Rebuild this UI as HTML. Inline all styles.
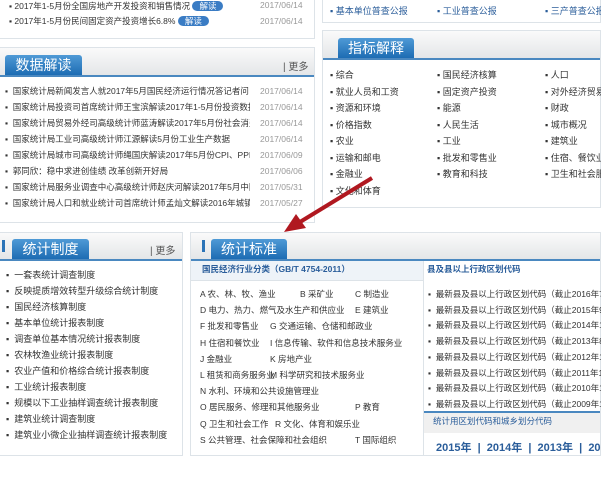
<!DOCTYPE html><html><head><meta charset="utf-8"><style>
*{margin:0;padding:0;box-sizing:border-box}
html,body{width:601px;height:479px;overflow:hidden}
body{background:#fff;font-family:"Liberation Sans","Noto Sans CJK SC",sans-serif;font-size:10px;color:#333;position:relative}
.p{position:absolute;border:1px solid #dde3e8;background:#fff;overflow:hidden}
.hd{position:absolute;left:0;right:0;top:0;background:linear-gradient(#fafafa,#e4e6e8);border-bottom:2px solid #4a88c0}
.tab{position:absolute;bottom:0;background:linear-gradient(#4f9ad6,#1d6cb3);color:#fff;font-size:14px;text-align:center;border-radius:3px 3px 0 0}
.r{position:absolute;white-space:nowrap;font-size:9px;overflow:hidden}
.d{position:absolute;color:#999;font-size:8.5px}
.more{position:absolute;font-size:10px;color:#555}
</style></head><body>
<div class="p" style="left:-1px;top:-2px;width:316px;height:41px"></div>
<div class="r" style="left:9px;top:0;font-size:8.5px">▪ 2017年1-5月份全国房地产开发投资和销售情况 <span style="background:#3a7cc4;color:#fff;border-radius:7px;padding:0 7px">解读</span></div>
<div class="d" style="left:260px;top:0">2017/06/14</div>
<div class="r" style="left:9px;top:15px;font-size:8.5px">▪ 2017年1-5月份民间固定资产投资增长6.8% <span style="background:#3a7cc4;color:#fff;border-radius:7px;padding:0 7px">解读</span></div>
<div class="d" style="left:260px;top:16px">2017/06/14</div>

<div class="p" style="left:322px;top:-2px;width:279px;height:25px"></div>
<div class="r" style="left:330px;top:4px;color:#2a5d9a">▪ 基本单位普查公报</div>
<div class="r" style="left:437px;top:4px;color:#2a5d9a">▪ 工业普查公报</div>
<div class="r" style="left:545px;top:4px;color:#2a5d9a;width:56px">▪ 三产普查公报</div>

<div class="p" style="left:-1px;top:47px;width:316px;height:176px">
<div class="hd" style="height:29px"><div class="tab" style="left:5px;width:77px;height:20px;line-height:20px">数据解读</div></div>
<div class="more" style="left:283px;top:10px">| 更多</div></div>
<div id="sj"></div>

<div class="p" style="left:322px;top:30px;width:279px;height:178px">
<div class="hd" style="height:29px"><div class="tab" style="left:15px;width:76px;height:20px;line-height:20px">指标解释</div></div></div>
<div id="zb"></div>

<div class="p" style="left:-1px;top:232px;width:184px;height:224px">
<div class="hd" style="height:28px"><div style="position:absolute;left:2px;top:7px;width:3px;height:12px;background:#2c74b8"></div><div class="tab" style="left:12px;width:77px;height:20px;line-height:20px">统计制度</div></div>
<div class="more" style="left:150px;top:9px">| 更多</div></div>
<div id="zd"></div>

<div class="p" style="left:190px;top:232px;width:411px;height:224px">
<div class="hd" style="height:28px"><div style="position:absolute;left:11px;top:7px;width:3px;height:12px;background:#2c74b8"></div><div class="tab" style="left:20px;width:76px;height:20px;line-height:20px">统计标准</div></div>
<div style="position:absolute;left:0;top:28px;width:232px;height:20px;background:#eef3f8;border-bottom:1px solid #dde3e8"></div>
<div style="position:absolute;left:232px;top:28px;bottom:0;border-left:1px solid #dde3e8"></div>
<div style="position:absolute;left:233px;top:178px;right:0;height:2px;background:#4a88c0"></div>
<div style="position:absolute;left:233px;top:180px;right:0;height:20px;background:#f0f0f0"></div>
</div>
<div class="r" style="left:202px;top:263px;color:#2a5d9a;font-weight:bold;font-size:8.5px">国民经济行业分类（GB/T 4754-2011）</div>
<div class="r" style="left:427px;top:263px;color:#2a5d9a;font-weight:bold;font-size:8.5px">县及县以上行政区划代码</div>
<div class="r" style="left:433px;top:415px;color:#2a5d9a;font-size:8.5px">统计用区划代码和城乡划分代码</div>
<div class="r" style="left:436px;top:439px;color:#2a5d9a;font-weight:bold;font-size:11px;width:165px">2015年 &nbsp;|&nbsp; 2014年 &nbsp;|&nbsp; 2013年 &nbsp;|&nbsp; 2012年</div>
<div id="bz"></div>

<svg style="position:absolute;left:0;top:0" width="601" height="479"><path d="M372 178 L300 222" stroke="#b01820" stroke-width="4" fill="none"/><polygon points="284,232 296,214 306,228" fill="#b01820"/></svg>
<script>
function add(id,html){document.getElementById(id).insertAdjacentHTML('beforeend',html)}
var sj=["国家统计局新闻发言人就2017年5月国民经济运行情况答记者问","国家统计局投资司首席统计师王宝滨解读2017年1-5月份投资数据","国家统计局贸易外经司高级统计师蓝涛解读2017年5月份社会消费...","国家统计局工业司高级统计师江源解读5月份工业生产数据","国家统计局城市司高级统计师绳国庆解读2017年5月份CPI、PPI数据","郭同欣：稳中求进创佳绩 改革创新开好局","国家统计局服务业调查中心高级统计师赵庆河解读2017年5月中国...","国家统计局人口和就业统计司首席统计师孟灿文解读2016年城镇..."];
var sd=["2017/06/14","2017/06/14","2017/06/14","2017/06/14","2017/06/09","2017/06/06","2017/05/31","2017/05/27"];
sj.forEach(function(t,i){var y=85+i*16;add('sj','<div class="r" style="left:5px;top:'+y+'px;width:245px;font-size:8.5px">▪ &nbsp;'+t+'</div><div class="d" style="left:260px;top:'+(y+1)+'px">'+sd[i]+'</div>')});
var zb=[["综合","国民经济核算","人口"],["就业人员和工资","固定资产投资","对外经济贸易"],["资源和环境","能源","财政"],["价格指数","人民生活","城市概况"],["农业","工业","建筑业"],["运输和邮电","批发和零售业","住宿、餐饮业和"],["金融业","教育和科技","卫生和社会服务"],["文化和体育","",""]];
zb.forEach(function(r,i){var y=68+i*16.5;[330,437,545].forEach(function(x,j){if(r[j])add('zb','<div class="r" style="left:'+x+'px;top:'+y+'px;width:'+(j==2?56:100)+'px">▪ '+r[j]+'</div>')})});
var zd=["一套表统计调查制度","反映提质增效转型升级综合统计制度","国民经济核算制度","基本单位统计报表制度","调查单位基本情况统计报表制度","农林牧渔业统计报表制度","农业产值和价格综合统计报表制度","工业统计报表制度","规模以下工业抽样调查统计报表制度","建筑业统计调查制度","建筑业小微企业抽样调查统计报表制度"];
zd.forEach(function(t,i){add('zd','<div class="r" style="left:6px;top:'+(268+i*16)+'px;width:176px">▪ &nbsp;'+t+'</div>')});
var bz=[[["A 农、林、牧、渔业",0],["B 采矿业",100],["C 制造业",155]],[["D 电力、热力、燃气及水生产和供应业",0],["E 建筑业",155]],[["F 批发和零售业",0],["G 交通运输、仓储和邮政业",70]],[["H 住宿和餐饮业",0],["I 信息传输、软件和信息技术服务业",70]],[["J 金融业",0],["K 房地产业",70]],[["L 租赁和商务服务业",0],["M 科学研究和技术服务业",70]],[["N 水利、环境和公共设施管理业",0]],[["O 居民服务、修理和其他服务业",0],["P 教育",155]],[["Q 卫生和社会工作",0],["R 文化、体育和娱乐业",75]],[["S 公共管理、社会保障和社会组织",0],["T 国际组织",155]]];
bz.forEach(function(r,i){r.forEach(function(c){add('bz','<div class="r" style="font-size:8.5px;left:'+(200+c[1])+'px;top:'+(288+i*16.2)+'px">'+c[0]+'</div>')})});
var yr=["2016年7月","2015年9月","2014年10月","2013年8月","2012年10月","2011年10月","2010年10月","2009年12月"];
yr.forEach(function(t,i){add('bz','<div class="r" style="font-size:8.5px;left:428px;top:'+(288+i*15.7)+'px;width:173px">▪ &nbsp;最新县及县以上行政区划代码（截止'+t+'）</div>')});
</script>
</body></html>
